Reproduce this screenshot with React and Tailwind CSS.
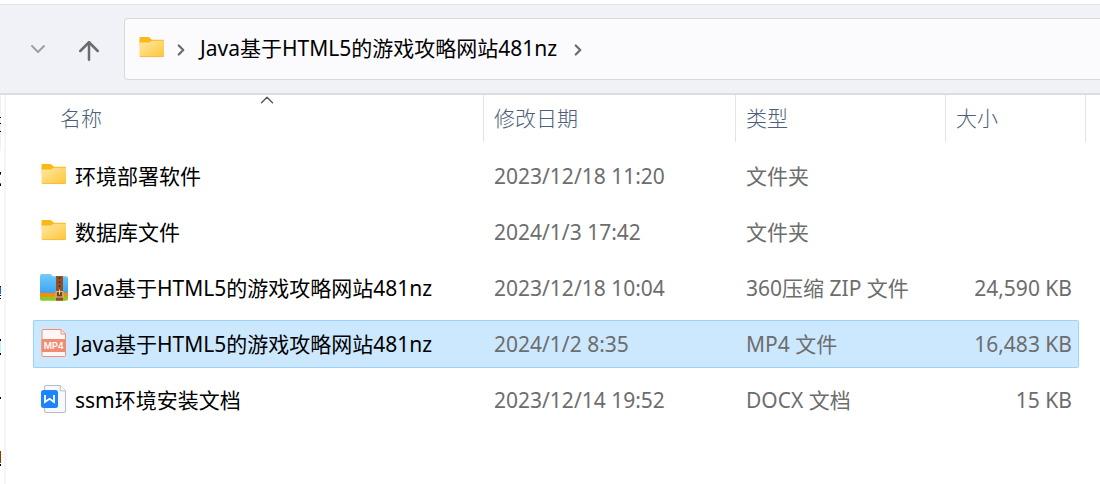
import { ArrowUp, ChevronDown, ChevronRight, ChevronUp } from 'lucide-react';

const FILES = [
  { name: '环境部署软件', date: '2023/12/18 11:20', type: '文件夹', size: '', icon: FolderIcon },
  { name: '数据库文件', date: '2024/1/3 17:42', type: '文件夹', size: '', icon: FolderIcon },
  { name: 'Java基于HTML5的游戏攻略网站481nz', date: '2023/12/18 10:04', type: '360压缩 ZIP 文件', size: '24,590 KB', icon: ZipIcon },
  { name: 'Java基于HTML5的游戏攻略网站481nz', date: '2024/1/2 8:35', type: 'MP4 文件', size: '16,483 KB', icon: Mp4Icon, selected: true },
  { name: 'ssm环境安装文档', date: '2023/12/14 19:52', type: 'DOCX 文档', size: '15 KB', icon: DocIcon },
];

function FolderIcon() {
  return (
    <svg width="28" height="30" viewBox="0 0 28 30" className="shrink-0" aria-hidden="true">
      <defs>
        <linearGradient id="folder" x1="0" y1="0" x2="1" y2="1">
          <stop offset="0" stopColor="#ffe8a3" />
          <stop offset="1" stopColor="#fdc63a" />
        </linearGradient>
      </defs>
      <path d="M1.5 4.2Q1.5 3 2.7 3H10.2Q11 3 11.6 3.6L13.8 5.8H25Q26 5.8 26 7V12H1.5Z" fill="#fab918" />
      <path d="M1.5 8.6H10.4Q11.2 8.6 11.9 8L12.9 7.2Q13.4 6.8 14.2 6.8H25.2Q26 6.8 26 7.6V22Q26 23 25 23H2.5Q1.5 23 1.5 22Z" fill="url(#folder)" />
      <path d="M2 22.6H25.5" stroke="#f0b840" strokeWidth="0.8" />
    </svg>
  );
}

function ZipIcon() {
  return (
    <svg width="28" height="30" viewBox="0 0 28 30" className="shrink-0" aria-hidden="true">
      <defs>
        <linearGradient id="zip" x1="0" y1="0" x2="0" y2="1">
          <stop offset="0" stopColor="#73cbfb" />
          <stop offset="1" stopColor="#3aa5f3" />
        </linearGradient>
      </defs>
      <path d="M0 19H28V26Q28 27.7 26.3 27.7H1.7Q0 27.7 0 26Z" fill="#86cc2c" />
      <path d="M0 16H28V22Q28 23.7 26.3 23.7H1.7Q0 23.7 0 22Z" fill="#ff8a08" />
      <path d="M0 3Q0 1 2 1H9.5Q10.7 1 11.4 1.8L12.8 3.2H26Q28 3.2 28 5.2V18.3Q28 20 26.3 20H1.7Q0 20 0 18.3Z" fill="url(#zip)" />
      <rect x="16" y="3" width="7" height="24.7" fill="#91502a" />
      <path d="M19.5 4.5V6M19.5 8.5V10M19.5 12.5V14" stroke="#4d2814" strokeWidth="1.5" />
      <rect x="16.2" y="18.6" width="6.6" height="5.4" fill="#7a3e1c" stroke="#e8c88a" />
      <path d="M19.5 16.5V21.5" stroke="#f0d48c" />
    </svg>
  );
}

function Mp4Icon() {
  return (
    <svg width="28" height="30" viewBox="0 0 28 30" className="shrink-0" aria-hidden="true">
      <path d="M2 1.5Q2 .5 3 .5H21L25.5 5V26.5Q25.5 27.5 24.5 27.5H3Q2 27.5 2 26.5Z" fill="#fff7f5" stroke="#f18c75" />
      <path d="M21 .5V5H25.5" fill="none" stroke="#f18c75" />
      <rect x="1.5" y="10" width="24.5" height="13" fill="#f28b73" />
      <text x="13.8" y="20" textAnchor="middle" fontFamily="Inter, sans-serif" fontSize="9" fontWeight="600" fill="#fff">MP4</text>
    </svg>
  );
}

function DocIcon() {
  return (
    <svg width="28" height="30" viewBox="0 0 28 30" className="shrink-0" aria-hidden="true">
      <path d="M4.5 2Q4.5 .5 6 .5H20.2L25.5 5.8V26Q25.5 27.5 24 27.5H6Q4.5 27.5 4.5 26Z" fill="#f8f9fc" stroke="#b5bbc8" />
      <path d="M20.2 .5V5.8H25.5" fill="#fff" stroke="#b5bbc8" />
      <rect x="1" y="5" width="17" height="18" rx="2.5" fill="#1f84fb" />
      <path d="M5 10V17L9.5 13.8L14 17V10" fill="none" stroke="#fff" strokeWidth="1.8" />
    </svg>
  );
}

// Edge of the navigation pane that is scrolled out of view
function NavEdge() {
  return (
    <div className="flex w-1.5 shrink-0 justify-between border-r-2 border-[#f5f5f6]" aria-hidden="true">
      <svg width="1" height="389" viewBox="0 0 1 389" shapeRendering="crispEdges">
        <path d="M0 0H1V56H0Z" fill="#f0f0f2" />
        <path d="M0 22H1V23H0ZM0 28H1V29H0ZM0 36H1V37H0ZM0 77H1V79H0ZM0 89H1V91H0ZM0 191H1V192H0ZM0 200H1V201H0ZM0 203H1V204H0ZM0 244H1V246H0ZM0 258H1V260H0ZM0 302H1V304H0ZM0 369H1V371H0Z" fill="#000" />
        <path d="M0 79H1V80H0ZM0 88H1V89H0ZM0 192H1V199H0Z" fill="#1677c8" />
        <path d="M0 246H1V258H0Z" fill="#b5f7ff" />
        <path d="M0 356H1V368H0Z" fill="#8c3a00" />
      </svg>
    </div>
  );
}

function AddressBar() {
  return (
    <header className="flex items-center border-t border-b-2 border-t-[#e5e5e7] border-b-[#dcdce1] bg-[#f0f2f8] py-[13px] pl-[26px]">
      <button type="button" aria-label="最近浏览的位置" className="text-[#a0a0a2]">
        <ChevronDown size={24} strokeWidth={2} />
      </button>
      <button type="button" aria-label="上移" className="ml-6 mr-5 pt-1 text-[#6c6c6e]">
        <ArrowUp size={30} strokeWidth={2} />
      </button>
      <nav className="flex h-[62px] grow items-center rounded-l border border-r-0 border-[#d8d9dd] bg-[#fbfbfe] pl-[13px]">
        <FolderIcon />
        <span className="flex pt-0.5 pl-1.5 text-[#6c6c6e]">
          <ChevronRight size={18} strokeWidth={3} />
        </span>
        <button type="button" className="ml-2.5 mr-3 whitespace-nowrap pb-0.5">Java基于HTML5的游戏攻略网站481nz</button>
        <span className="flex pt-0.5 text-[#6c6c6e]">
          <ChevronRight size={18} strokeWidth={3} />
        </span>
      </nav>
    </header>
  );
}

function HeaderCell({ label, first }) {
  return (
    <th scope="col" className="p-0 text-left align-top font-light">
      <button
        type="button"
        className={`relative flex h-[47px] items-center border-r border-[#e3e3e4] pb-0.5 text-left ${first ? 'ml-4 w-[calc(100%-16px)] pl-[11px]' : 'w-full pl-2.5'}`}
      >
        {label}
        {first && <ChevronUp size={22} strokeWidth={1.5} className="absolute -top-1.5 left-1/2 -ml-2.5 text-[#555]" />}
      </button>
    </th>
  );
}

function FileRow({ file }) {
  const Icon = file.icon;
  const fill = file.selected ? 'border-[#99d1ff] bg-[#cce8ff]' : 'border-transparent';
  return (
    <tr aria-selected={Boolean(file.selected)}>
      <td className="h-14 p-0">
        <div className={`flex h-12 items-center gap-[7px] rounded-l-xs border border-r-0 pl-1.5 text-black ${fill}`}>
          <Icon />
          {file.name}
        </div>
      </td>
      <td className="p-0">
        <div className={`flex h-12 items-center border-y pl-2.5 ${fill}`}>{file.date}</div>
      </td>
      <td className="p-0">
        <div className={`flex h-12 items-center border-y pl-2.5 ${fill}`}>{file.type}</div>
      </td>
      <td className="p-0">
        <div className={`mr-[7px] flex h-12 items-center justify-end rounded-r-xs border border-l-0 pr-1.5 ${fill}`}>{file.size}</div>
      </td>
    </tr>
  );
}

export default function App() {
  return (
    <div className="flex min-h-screen flex-col bg-white pt-1 font-['Noto_Sans','Noto_Sans_CJK_SC',sans-serif] text-[21px] leading-7 text-black">
      <AddressBar />
      <main className="flex grow">
        <NavEdge />
        <div className="grow pl-[27px] pr-3.5">
          <table className="w-full table-fixed border-collapse whitespace-nowrap text-[#6d6d6d]">
            <colgroup>
              <col />
              <col className="w-[252px]" />
              <col className="w-[210px]" />
              <col className="w-[140px]" />
            </colgroup>
            <thead className="text-[#4c607a]">
              <tr className="h-[53px]">
                <HeaderCell label="名称" first />
                <HeaderCell label="修改日期" />
                <HeaderCell label="类型" />
                <HeaderCell label="大小" />
              </tr>
            </thead>
            <tbody>
              {FILES.map((file) => (
                <FileRow key={file.name + file.type} file={file} />
              ))}
            </tbody>
          </table>
        </div>
      </main>
    </div>
  );
}
